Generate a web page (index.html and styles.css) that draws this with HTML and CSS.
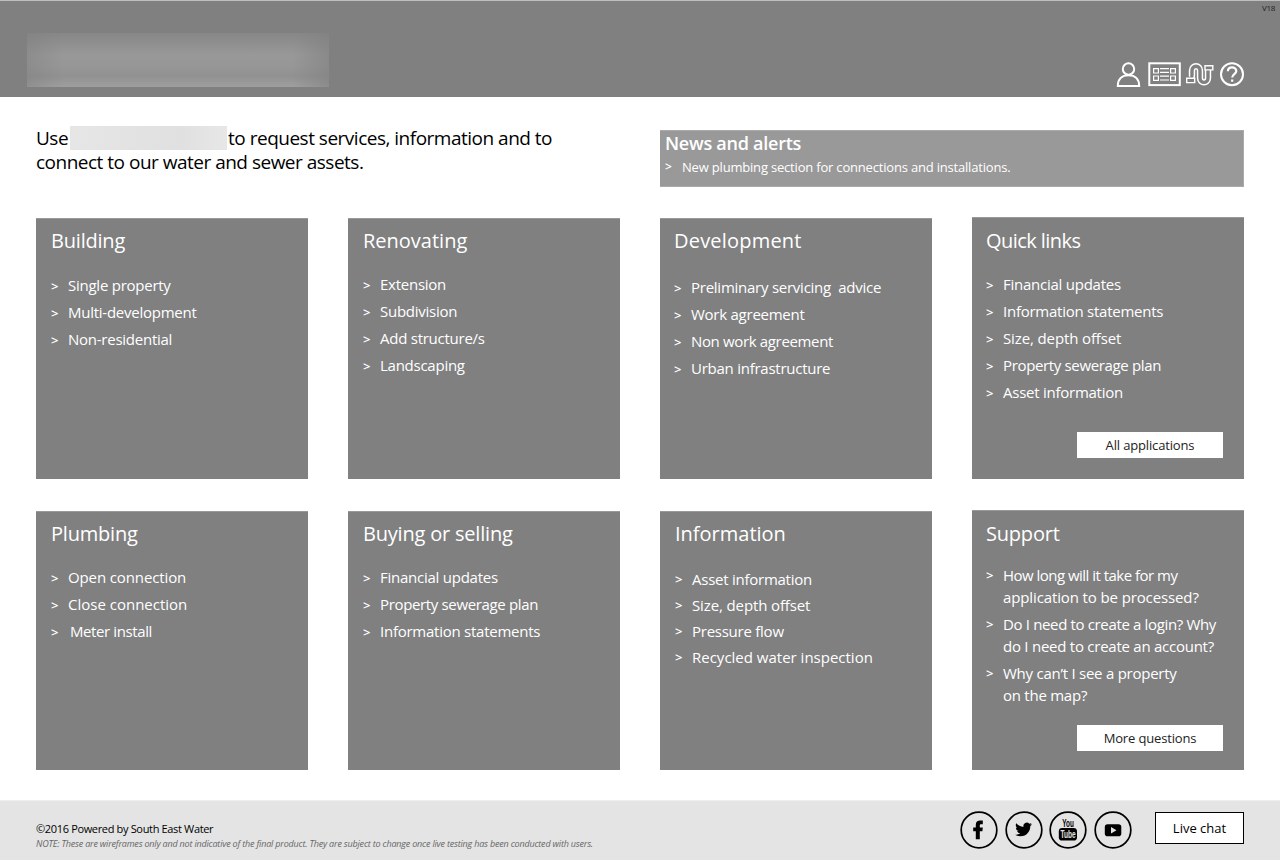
FILE: index.html
```html
<!DOCTYPE html>
<html lang="en">
<head>
<meta charset="utf-8">
<title>Services</title>
<link rel="stylesheet" href="styles.css">
</head>
<body>
<header class="header">
  <div class="brand"></div>
  <span class="version">V18</span>
  <nav class="tools">
    <svg class="tool-icons" viewBox="0 0 130 30" width="130" height="30" fill="none" stroke="#fff" stroke-width="2">
      <circle cx="12.5" cy="9" r="5.7"/>
      <path d="M1.8 26H23.2C23.2 19 19 15.3 12.5 15.3S1.8 19 1.8 26Z"/>
      <rect x="33.3" y="3.3" width="30.5" height="21.8"/>
      <g stroke-width="1.2">
        <path d="M37.6 8.6h4.8v4.4h-4.8zM37.6 16h4.8v4.4h-4.8zM54.6 8.6h4.8v4.4h-4.8zM54.6 16h4.8v4.4h-4.8zM44 8.7h9M44 12.4h9M44 16.2h9M44 20h9"/>
      </g>
      <path stroke-width="6.4" d="M75.2 18.5C76.2 17.5 76 16 76 14V10.5C76 4.8 84 4.8 84 10.5V18C84 23.8 92 23.8 92 18V9"/>
      <path stroke="#808080" stroke-width="3.4" d="M75 18.5C76.2 17.5 76 16 76 14V10.5C76 4.8 84 4.8 84 10.5V18C84 23.8 92 23.8 92 18V9"/>
      <path fill="#808080" stroke-width="1.4" d="M70.7 18.2h8v4.4h-8zM89 5.7h7.8v4.2H89z"/>
      <circle cx="116" cy="14.3" r="11"/>
      <path d="M111.9 11.3C111.9 6 120.3 6.2 120.3 11C120.3 14.2 116.2 14 116.2 17.6M116.2 19.4V21.8" stroke-width="2.2"/>
    </svg>
  </nav>
</header>
<main class="main">
  <section class="top">
    <p class="intro">Use<span class="redacted"></span>to request services, information and to<br>connect to our water and sewer assets.</p>
    <div class="news">
      <h2 class="news-title">News and alerts</h2>
      <p class="news-item"><span class="news-mark">&gt;</span>New plumbing section for connections and installations.</p>
    </div>
  </section>
  <section class="cards">
    <article class="card">
      <h2 class="title snug">Building</h2>
      <ul class="list list-building"><li>Single property</li><li>Multi-development</li><li>Non-residential</li></ul>
    </article>
    <article class="card">
      <h2 class="title">Renovating</h2>
      <ul class="list"><li>Extension</li><li>Subdivision</li><li>Add structure/s</li><li>Landscaping</li></ul>
    </article>
    <article class="card card-dev">
      <h2 class="title title-dev">Development</h2>
      <ul class="list list-dev"><li>Preliminary servicing&nbsp; advice</li><li>Work agreement</li><li class="tight">Non work agreement</li><li>Urban infrastructure</li></ul>
    </article>
    <article class="card card-quick">
      <h2 class="title title-quick">Quick links</h2>
      <ul class="list list-quick"><li>Financial updates</li><li>Information statements</li><li class="loose">Size, depth offset</li><li class="tight">Property sewerage plan</li><li>Asset information</li></ul>
      <a class="button">All applications</a>
    </article>
    <article class="card">
      <h2 class="title snug">Plumbing</h2>
      <ul class="list"><li class="loose">Open connection</li><li class="looser">Close connection</li><li class="indent">Meter install</li></ul>
    </article>
    <article class="card">
      <h2 class="title snug">Buying or selling</h2>
      <ul class="list"><li>Financial updates</li><li class="tight">Property sewerage plan</li><li>Information statements</li></ul>
    </article>
    <article class="card">
      <h2 class="title">Information</h2>
      <ul class="list list-info"><li>Asset information</li><li class="loose">Size, depth offset</li><li>Pressure flow</li><li class="looser">Recycled water inspection</li></ul>
    </article>
    <article class="card card-support">
      <h2 class="title snug">Support</h2>
      <ul class="list list-support"><li><span class="tighter">How long will it take for my</span><br><span class="loose">application to be processed?</span></li><li><span class="tight">Do I need to create a login? Why</span><br>do I need to create an account?</li><li>Why can’t I see a property<br>on the map?</li></ul>
      <a class="button">More questions</a>
    </article>
  </section>
</main>
<footer class="footer">
  <div class="legal">
    <p class="copyright">©2016 Powered by South East Water</p>
    <p class="note">NOTE: These are wireframes only and not indicative of the final product. They are subject to change once live testing has been conducted with users.</p>
  </div>
  <div class="social">
    <svg width="38" height="38" viewBox="0 0 38 38"><circle class="ring" cx="19" cy="19" r="17.8"/><path d="M15.8 28.3V20.2H13.2V16.5H15.8V13.8C15.8 10.8 17.6 9.6 20.2 9.6H22.8V13.2H21.2C20.2 13.2 19.8 13.6 19.8 14.4V16.5H22.8L22.4 20.2H19.8V28.3Z"/></svg>
    <svg width="38" height="38" viewBox="0 0 38 38"><circle class="ring" cx="19" cy="19" r="17.8"/><path transform="translate(10.2 10.1) scale(.7)" d="M23.95 4.57a10 10 0 0 1-2.82.77 4.96 4.96 0 0 0 2.16-2.72c-.95.55-2 .95-3.13 1.18a4.92 4.92 0 0 0-8.38 4.48C7.69 8.1 4.07 6.13 1.64 3.16a4.92 4.92 0 0 0 1.52 6.57 4.9 4.9 0 0 1-2.23-.61v.06a4.92 4.92 0 0 0 3.95 4.83 5 5 0 0 1-2.21.08 4.94 4.94 0 0 0 4.6 3.42A9.87 9.87 0 0 1 0 19.54a14 14 0 0 0 7.55 2.21c9.05 0 14-7.5 14-13.98 0-.21 0-.42-.02-.63a9.94 9.94 0 0 0 2.46-2.55z"/></svg>
    <svg width="38" height="38" viewBox="0 0 38 38"><circle class="ring" cx="19" cy="19" r="17.8"/><rect x="9.8" y="17" width="18.2" height="12.6" rx="3.4"/><text class="yt-you" x="13.2" y="16" textLength="11.6" lengthAdjust="spacingAndGlyphs">You</text><text class="yt-tube" x="11.4" y="26.9" textLength="15.2" lengthAdjust="spacingAndGlyphs">Tube</text></svg>
    <svg width="38" height="38" viewBox="0 0 38 38"><circle class="ring" cx="19" cy="19" r="17.8"/><rect x="10.8" y="13.2" width="16.5" height="12" rx="2.8"/><path class="play" d="M17 16V22.4L22.5 19.2Z"/></svg>
  </div>
  <a class="chat">Live chat</a>
</footer>
</body>
</html>
```
FILE: styles.css
```css
* { box-sizing: border-box; }
body { margin: 0; height: 861px; overflow: hidden; background: #fff; font-family: "Open Sans", "Noto Sans", sans-serif; color: #000; display: flex; flex-direction: column; }
h2, p, ul { margin: 0; padding: 0; font-weight: 400; white-space: nowrap; }
.header { position: relative; height: 97px; flex: none; background: #808080; border-top: 1px solid #bcbfbe; display: flex; justify-content: space-between; padding: 32px 34px 0 27px; }
.brand { width: 302px; height: 54px; background: linear-gradient(90deg, #80808077 0, #80808000 12%, #80808000 88%, #80808099 100%), linear-gradient(#878787 0, #989898 40%, #979797 60%, #919191 80%, #9f9f9f 100%); }
.version { position: absolute; right: 5px; top: 1px; font-size: 8px; line-height: 12px; color: #222; letter-spacing: -.3px; }
.tools { padding-top: 27px; }
.tool-icons { display: block; }
.main { height: 703px; flex: none; padding: 29px 36px 0; }
.top { display: flex; justify-content: space-between; height: 92px; }
.intro { font-size: 19px; line-height: 24px; letter-spacing: -.5px; }
.redacted { display: inline-block; vertical-align: top; width: 157px; height: 24px; margin: 0 1px 0 2px; background: linear-gradient(90deg, #e6e6e6, #e0e0e0 70%, #e7e7e7); }
.news { width: 584px; height: 57px; margin-top: 4px; padding-left: 5px; background: #999; border: 1px solid #aaa; border-left: 0; color: #fff; }
.news-title { font-size: 18px; line-height: 25px; font-weight: 600; letter-spacing: -.25px; }
.news-item { font-size: 13px; line-height: 22px; display: flex; letter-spacing: -.19px; }
.news-mark { width: 17px; font-size: 12px; font-weight: 600; }
.cards { display: grid; grid-template-columns: repeat(4, 272px); grid-template-rows: 261px 259px; gap: 32px 40px; }
.card { background: #808080; color: #fff; padding: 7px 15px 0; border-top: 1px solid #999; display: flex; flex-direction: column; }
.card-dev { padding-left: 14px; }
.card-quick, .card-support { margin-top: -1px; padding: 8px 15px 0 14px; }
.title { font-size: 20px; line-height: 30px; margin-bottom: 15px; }
.snug { letter-spacing: -.2px; }
.title-dev { letter-spacing: .2px; }
.title-quick { letter-spacing: -.55px; }
.list { list-style: none; font-size: 15px; line-height: 27px; letter-spacing: -.25px; }
.list li { padding-left: 17px; display: block; }
.list li::before { content: ">"; float: left; margin-left: -17px; font-size: 13px; font-weight: 600; line-height: 28px; height: 20px; letter-spacing: 0; }
.list-building { padding-top: 1px; }
.list-dev { padding-top: 3px; }
.list-info { padding-top: 2px; line-height: 26px; }
.list.list-info li::before { line-height: 27px; }
.list-support { line-height: 22px; }
.list-support li { margin-bottom: 5px; }
.list.list-support li::before { line-height: 23px; }
.tight { letter-spacing: -.35px; }
.tighter { letter-spacing: -.52px; }
.loose { letter-spacing: -.12px; }
.looser { letter-spacing: 0; }
.indent { text-indent: 2px; letter-spacing: -.4px; }
.list .indent::before { text-indent: 0; }
.button { margin: auto 6px 21px auto; width: 146px; height: 26px; background: #fff; color: #222; font-size: 13px; line-height: 26px; text-align: center; letter-spacing: -.15px; }
.card-support .button { margin-bottom: 19px; }
.footer { height: 60px; flex: none; background: #e4e4e4; border-top: 1px solid #eee; display: flex; align-items: flex-start; padding: 10px 36px 0; }
.legal { width: 924px; padding-top: 9px; }
.copyright { font-size: 11px; line-height: 18px; letter-spacing: -.34px; }
.note { font-size: 9px; line-height: 12px; font-style: italic; color: #666; letter-spacing: -.19px; }
.social { display: flex; gap: 6.7px; }
.social svg { display: block; }
.ring { fill: none; stroke: #000; stroke-width: 1.7; }
.play { fill: #e4e4e4; }
.yt-you, .yt-tube { font-family: "Liberation Sans", sans-serif; font-weight: 700; font-size: 10px; }
.yt-tube { fill: #e4e4e4; }
.chat { margin-left: auto; margin-top: 1px; width: 89px; height: 32px; border: 1px solid #000; background: #fff; font-size: 13px; line-height: 30px; text-align: center; }
```
